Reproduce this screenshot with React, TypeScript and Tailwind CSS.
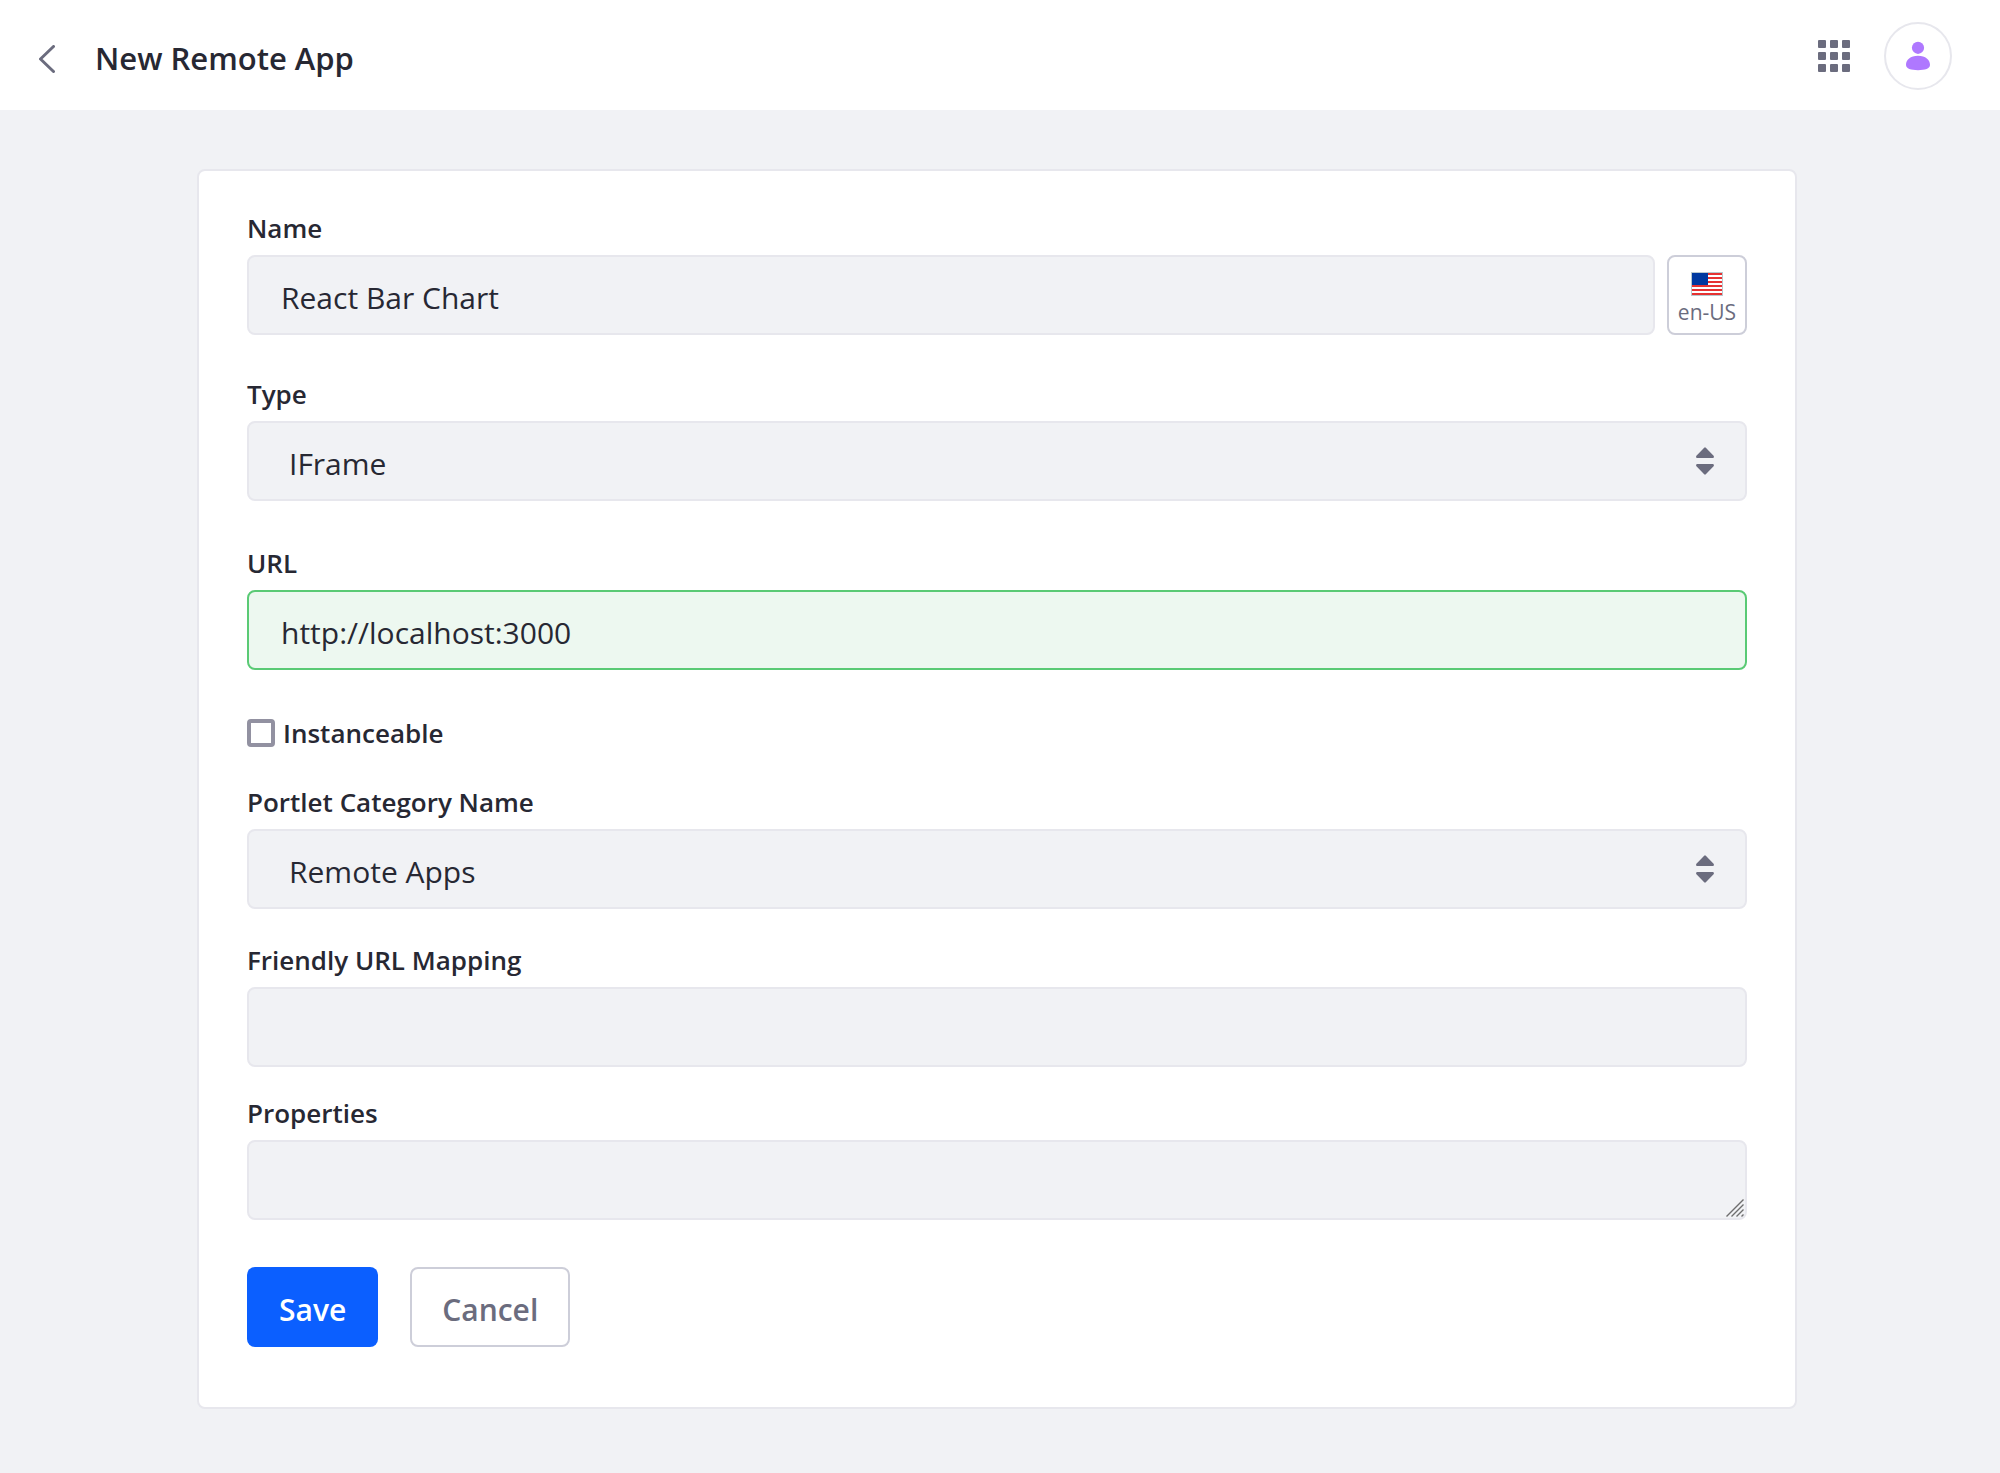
import React, { useState } from "react";

const LABEL = "mb-3.5 block text-[26px] leading-[26px] font-semibold";
const CONTROL =
  "block h-20 w-full rounded-lg border-2 border-[#e7e7ed] bg-[#f1f2f5] text-[30px] leading-10 text-[#272833] outline-none focus:border-[#80acff]";

function ChevronLeft() {
  return (
    <svg viewBox="0 0 16 28" className="h-7 w-4" fill="none" aria-hidden="true">
      <path
        d="M14.5 1.5 1.5 14l13 12.5"
        stroke="#6b6c7e"
        strokeWidth="3"
        strokeLinecap="round"
        strokeLinejoin="round"
      />
    </svg>
  );
}

function AppsGrid() {
  const steps = [0, 12, 24];
  return (
    <svg viewBox="0 0 32 32" className="size-8" fill="#6b6c7e" aria-hidden="true">
      {steps.map((y) =>
        steps.map((x) => <rect key={`${x}-${y}`} x={x} y={y} width="8" height="8" rx="1" />)
      )}
    </svg>
  );
}

function Person() {
  return (
    <svg viewBox="0 0 32 32" className="size-8" fill="#af78ff" aria-hidden="true">
      <circle cx="16" cy="7.800" r="6.1" />
      <path d="M16 15.800c7.600 0 12 4 12 9 0 4-5 5.400-12 5.400S4 28.800 4 24.800c0-5 4.400-9 12-9Z" />
    </svg>
  );
}

function Flag() {
  const stripes = [1, 5, 9, 13, 17, 21];
  return (
    <svg viewBox="0 0 32 24" className="h-6 w-8" shapeRendering="crispEdges" aria-hidden="true">
      <rect width="32" height="24" fill="#b9c9cf" />
      <rect x="1" y="1" width="30" height="22" fill="#fff" />
      {stripes.map((y) => (
        <rect key={y} x="1" y={y} width="30" height="2" fill="#e63232" />
      ))}
      <rect x="1" y="1" width="16" height="12" fill="#0038a0" />
    </svg>
  );
}

function DoubleCaret() {
  return (
    <svg
      viewBox="0 0 18 28"
      className="pointer-events-none absolute top-1/2 right-[33px] h-7 w-[18px] -translate-y-1/2"
      fill="#6b6c7e"
      aria-hidden="true"
    >
      <path d="M8.200.700.400 8.700C-.3 9.700.2 11 1.400 11h15.200c1.200 0 1.700-1.300 1-2.300L9.800.700a1.100 1.100 0 0 0-1.600 0Z" />
      <path d="M8.200 27.300.400 19.300C-.3 18.300.2 17 1.400 17h15.200c1.200 0 1.700 1.300 1 2.300l-7.800 8a1.100 1.100 0 0 1-1.600 0Z" />
    </svg>
  );
}

function ResizeGrip() {
  return (
    <svg
      viewBox="0 0 18 18"
      className="pointer-events-none absolute right-[3px] bottom-[3px] size-[18px]"
      stroke="#6e6e6e"
      strokeWidth="1.400"
      aria-hidden="true"
    >
      <path d="M.5 17.500 17.500.5M5.500 17.500l12-12M10.500 17.500l7-7M15.500 17.500l2-2" />
    </svg>
  );
}

function SelectField({ id, label, options }: { id: string; label: string; options: string[] }) {
  return (
    <>
      <label htmlFor={id} className={LABEL}>
        {label}
      </label>
      <div className="relative">
        <select id={id} className={`${CONTROL} appearance-none pt-1.5 pr-16 pl-10`}>
          {options.map((o) => (
            <option key={o}>{o}</option>
          ))}
        </select>
        <DoubleCaret />
      </div>
    </>
  );
}

export default function App() {
  const [name, setName] = useState("React Bar Chart");
  const [url, setUrl] = useState("http://localhost:3000");

  return (
    <div className="min-h-screen bg-[#f1f2f5] font-['Open_Sans',sans-serif] text-[#272833]">
      <header className="flex h-[110px] items-center bg-white pr-12 pl-[39px]">
        <button type="button" aria-label="Back" className="mt-2">
          <ChevronLeft />
        </button>
        <h1 className="ml-10 pt-1.5 text-[31px] leading-10 font-semibold">New Remote App</h1>
        <div className="ml-auto flex items-center gap-[34px] pt-0.5">
          <button type="button" aria-label="Applications">
            <AppsGrid />
          </button>
          <button
            type="button"
            aria-label="User profile"
            className="flex size-[68px] items-center justify-center rounded-full border-2 border-[#e7e7ed]"
          >
            <Person />
          </button>
        </div>
      </header>

      <main className="pt-[59px] pr-[6px] pb-16">
        <form
          className="mx-auto max-w-[1600px] rounded-lg border-2 border-[#e7e7ed] bg-white px-12 pt-11 pb-[60px]"
          onSubmit={(e) => e.preventDefault()}
        >
          <div>
            <label htmlFor="name" className={LABEL}>
              Name
            </label>
            <div className="flex gap-3">
              <input
                id="name"
                className={`${CONTROL} px-8 pt-1`}
                value={name}
                onChange={(e) => setName(e.target.value)}
              />
              <button
                type="button"
                className="flex size-20 shrink-0 flex-col items-center rounded-lg border-2 border-[#cdced9] bg-white pt-[15px] text-[#6b6c7e]"
              >
                <Flag />
                <span className="pt-1 text-[21px] leading-6">en-US</span>
              </button>
            </div>
          </div>

          <div className="mt-[46px]">
            <SelectField id="type" label="Type" options={["IFrame", "Custom Element"]} />
          </div>

          <div className="mt-[49px]">
            <label htmlFor="url" className={LABEL}>
              URL
            </label>
            <input
              id="url"
              className="block h-20 w-full rounded-lg border-2 border-[#5aca75] bg-[#edf8f0] px-8 pt-1 text-[30px] leading-10 text-[#272833] outline-none"
              value={url}
              onChange={(e) => setUrl(e.target.value)}
            />
          </div>

          <label className="mt-12 flex w-fit items-center gap-2 text-[26px] leading-[30px] font-semibold">
            <input
              type="checkbox"
              className="size-7 appearance-none rounded-sm border-4 border-[#9291a1] bg-white checked:bg-[#0b5fff]"
            />
            Instanceable
          </label>

          <div className="mt-[41px]">
            <SelectField id="category" label="Portlet Category Name" options={["Remote Apps", "Sample"]} />
          </div>

          <div className="mt-[38px]">
            <label htmlFor="mapping" className={LABEL}>
              Friendly URL Mapping
            </label>
            <input id="mapping" className={`${CONTROL} px-8 pt-1`} />
          </div>

          <div className="mt-[33px]">
            <label htmlFor="properties" className={LABEL}>
              Properties
            </label>
            <div className="relative">
              <textarea id="properties" className={`${CONTROL} resize-none px-8 py-4`} />
              <ResizeGrip />
            </div>
          </div>

          <div className="mt-[47px] flex gap-8">
            <button
              type="submit"
              className="h-20 rounded-lg bg-[#0b5fff] px-8 pt-1.5 text-[30px] leading-10 font-semibold text-white"
            >
              Save
            </button>
            <button
              type="button"
              className="h-20 rounded-lg border-2 border-[#cdced9] bg-white px-[30px] pt-1.5 text-[30px] leading-10 font-semibold text-[#6b6c7e]"
            >
              Cancel
            </button>
          </div>
        </form>
      </main>
    </div>
  );
}
